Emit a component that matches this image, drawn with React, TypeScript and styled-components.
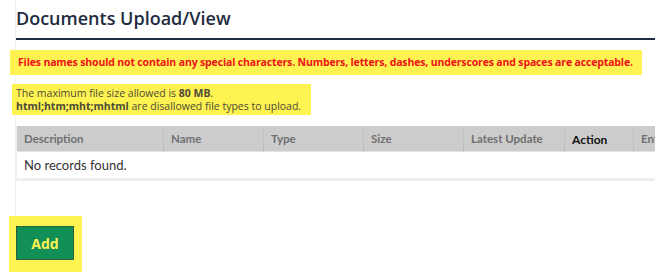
import React from "react";
import styled, { createGlobalStyle } from "styled-components";

const Global = createGlobalStyle`
  html, body { margin: 0; padding: 0; background: #fff; overflow: hidden; }
  body { font-family: Lato, "Open Sans", sans-serif; }
`;

const Page = styled.div`
  width: 655px;
  height: 272px;
  overflow: hidden;
`;

const Inner = styled.div`
  margin-left: 15px;
  border-left: 1px solid #f2f2f2;
  height: 272px;
  display: flex;
  flex-direction: column;
`;

const Heading = styled.h2`
  margin: 0;
  padding: 6px 0 6px 0;
  font-family: "Open Sans", sans-serif;
  font-weight: 600;
  font-size: 18px;
  line-height: 24px;
  color: #1e2b40;
  border-bottom: 2px solid #1e2b40;
  height: 26px;
`;

const Notice = styled.div<{ $w: number; $ml: number }>`
  background: #fff352;
  margin-left: ${(p) => p.$ml}px;
  width: ${(p) => p.$w}px;
  box-sizing: border-box;
  font-family: "Open Sans", sans-serif;
  font-size: 10.5px;
`;

const Warn = styled(Notice)`
  margin-top: 10px;
  height: 25px;
  padding: 5px 0 0 8px;
  color: #f0101a;
  font-weight: 700;
  line-height: 15px;
  letter-spacing: -0.15px;
`;

const Info = styled(Notice)`
  margin-top: 9px;
  height: 32px;
  padding: 3px 0 0 4px;
  color: #4b4a36;
  line-height: 13px;
  b { font-weight: 700; }
`;

const Table = styled.div`
  margin-top: 11px;
  width: 700px;
  border-left: 1px solid #eeeeee;
  border-bottom: 3px solid #eeeeee;
`;

const HeadRow = styled.div`
  display: grid;
  grid-template-columns: 147px 100px 100px 100px 101px 69px 1fr;
  background: #cccccc;
  height: 25px;
  border-bottom: 1px solid #e4e4e4;
`;

const HeadCell = styled.div<{ $dark?: boolean }>`
  padding-left: 7px;
  border-right: 1px solid #c0c0c0;
  font-size: ${(p) => (p.$dark ? "12px" : "11.5px")};
  font-weight: 700;
  color: ${(p) => (p.$dark ? "#111" : "#6f6f6f")};
  line-height: 25px;
  padding-top: ${(p) => (p.$dark ? "1px" : "0")};
`;

const EmptyRow = styled.div`
  height: 26px;
  line-height: 26px;
  padding-left: 7px;
  font-size: 13px;
  color: #333;
  background: #fff;
`;

const AddWrap = styled.div`
  margin-top: 35px;
  margin-left: -7px;
  width: 73px;
  height: 56px;
  background: #fff352;
  padding: 10px 0 0 7px;
  box-sizing: border-box;
`;

const AddButton = styled.button`
  width: 58px;
  height: 34px;
  background: #128f57;
  border: 1px dotted #3a3a20;
  color: #fff352;
  font-family: "Open Sans", sans-serif;
  font-weight: 700;
  font-size: 14px;
  padding: 0;
  cursor: pointer;
`;

const cols = ["Description", "Name", "Type", "Size", "Latest Update", "Action", "Entity"];

export default function App() {
  return (
    <>
      <Global />
      <Page>
        <Inner>
          <Heading>Documents Upload/View</Heading>
          <Warn $w={632} $ml={-6}>
            Files names should not contain any special characters. Numbers, letters, dashes, underscores and spaces are acceptable.
          </Warn>
          <Info $w={299} $ml={-4}>
            The maximum file size allowed is <b>80 MB</b>.
            <br />
            <b>html;htm;mht;mhtml</b> are disallowed file types to upload.
          </Info>
          <Table>
            <HeadRow>
              {cols.map((c) => (
                <HeadCell key={c} $dark={c === "Action"}>
                  {c}
                </HeadCell>
              ))}
            </HeadRow>
            <EmptyRow>No records found.</EmptyRow>
          </Table>
          <AddWrap>
            <AddButton>Add</AddButton>
          </AddWrap>
        </Inner>
      </Page>
    </>
  );
}
